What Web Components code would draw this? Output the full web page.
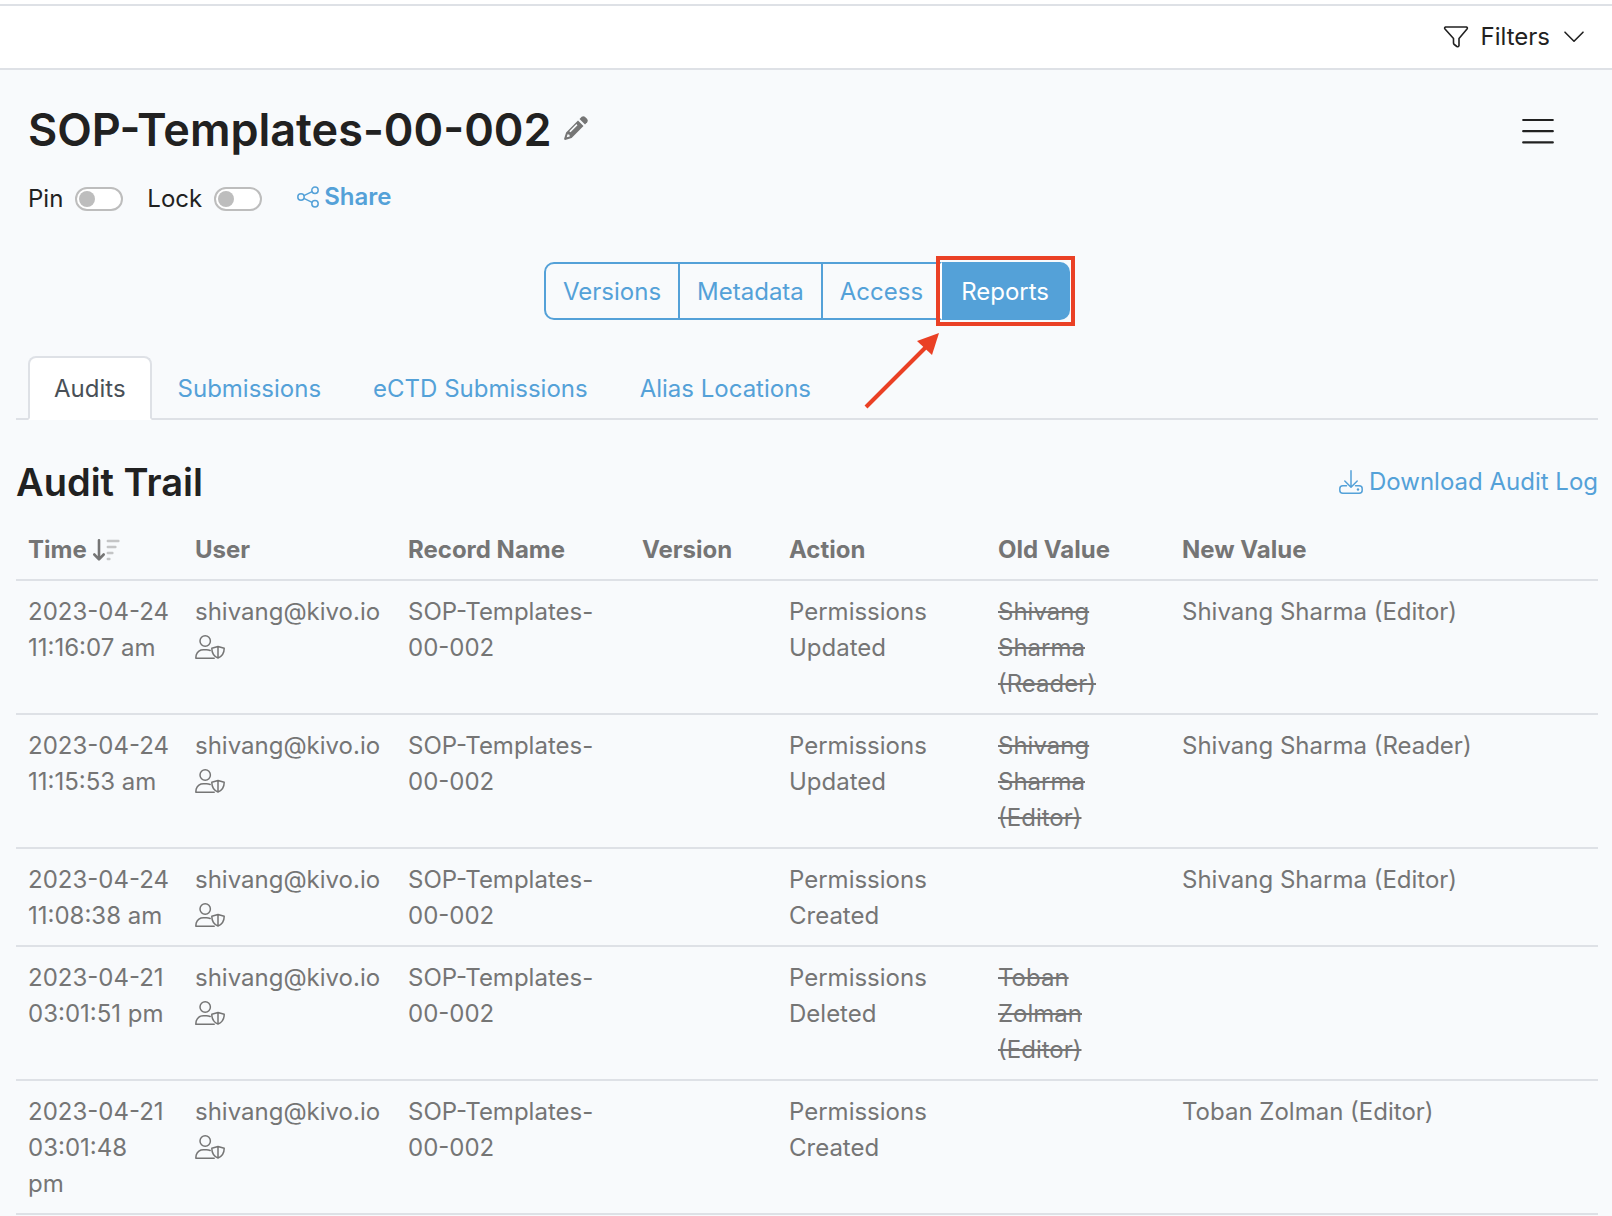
<!DOCTYPE html>
<html lang="en">
<head>
<meta charset="utf-8">
<title>SOP-Templates-00-002</title>
<style>
  :root {
    --ink: #212121;
    --muted: #757575;
    --blue: #54a1d8;
    --line: #dee1e6;
    --page: #f8fafc;
    --red: #ea4025;
  }
  body {
    margin: 0;
    background: var(--page);
    color: var(--ink);
    font: 400 24px/36px Inter, "Liberation Sans", sans-serif;
  }
</style>
</head>
<body>
<doc-page></doc-page>

<script>
const ICONS = {
  filter: [26, 24, '<path d="M2.6 2H23.4Q25 2.600 24 4L16 13.500V20.500Q15.500 22.300 13.900 21.500L11.300 19.500Q10.500 18.900 10.500 18V13.500L2 4Q1 2.600 2.600 2Z" fill="none" stroke="currentColor" stroke-width="1.600" stroke-linejoin="round"/>'],
  chevron: [20, 12, '<path d="M1 1.200 10 10.200 19 1.200" fill="none" stroke="currentColor" stroke-width="1.600" stroke-linecap="round" stroke-linejoin="round"/>'],
  menu: [32, 26, '<path d="M1.200 2H30.800M1.200 13.200H30.800M1.200 24.400H30.800" stroke="currentColor" stroke-width="2.200" stroke-linecap="round"/>'],
  pencil: [24, 24, '<path fill="currentColor" fill-rule="evenodd" d="M14 4.500 19.500 10 7.600 21.900 1.200 23.900Q0 24 .1 22.800L2.100 16.400ZM12.400 8.100 5.300 15.200 6.500 16.200 13.500 9.300ZM3.600 18.200 2.700 21.300 5.800 20.400 5.400 18.700Z"/><path fill="currentColor" d="M15.500 3 17.700.8Q19.300-.4 20.900.8L23.200 3.100Q24.500 4.800 23.200 6.300L21 8.500Z"/>'],
  share: [22, 22, '<g fill="none" stroke="currentColor" stroke-width="1.500"><circle cx="4" cy="11" r="3.200"/><circle cx="18" cy="4.200" r="3.200"/><circle cx="18" cy="17.800" r="3.200"/><path d="M6.900 9.600 15.100 5.600M6.900 12.400 15.100 16.400"/></g>'],
  sort: [27, 22, '<path d="M6 1.200V19.500M1.300 15.500 6 20.300 10.700 15.500" fill="none" stroke="currentColor" stroke-width="2.600" stroke-linecap="round" stroke-linejoin="round"/><path d="M14.800 2H25.400M14.800 8H22.400M14.800 14H19.400M14.800 20H16.400" stroke="currentColor" stroke-opacity=".4" stroke-width="2.400" stroke-linecap="round"/>'],
  download: [24, 24, '<g fill="none" stroke="currentColor" stroke-width="1.500" stroke-linecap="round" stroke-linejoin="round"><path d="M12 .8V17M5.800 11 12 17.200 18.200 11"/><path d="M7.500 15.700H3.800Q.8 15.700 .8 18.700V20.200Q.8 23.200 3.800 23.200H20.200Q23.200 23.200 23.200 20.200V18.700Q23.200 15.700 20.200 15.700H16.500"/></g><circle cx="19" cy="19.500" r="1.200" fill="currentColor"/>'],
  usershield: [30, 24, '<g fill="none" stroke="currentColor" stroke-width="1.500" stroke-linejoin="round"><circle cx="10.200" cy="6" r="5.200"/><path d="M15.200 15.500Q13.500 14.800 11.500 14.800H8.500Q3 14.800 1.200 20L.8 23.200H19.200" stroke-linecap="round"/><path d="M23 11.500 29.200 13.300Q29.200 20.500 23 23.100 16.800 20.500 16.800 13.300ZM23 11.500V23"/></g>']
};

class UiIcon extends HTMLElement {
  connectedCallback() {
    const [w, h, body] = ICONS[this.getAttribute('name')];
    this.attachShadow({mode: 'open'}).innerHTML = `
      <style>:host{display:inline-flex;flex:none}svg{display:block;overflow:visible}</style>
      <svg width="${w}" height="${h}" viewBox="0 0 ${w} ${h}" aria-hidden="true">${body}</svg>`;
  }
}
customElements.define('ui-icon', UiIcon);

class FilterBar extends HTMLElement {
  connectedCallback() {
    this.attachShadow({mode: 'open'}).innerHTML = `
      <style>
        :host{display:block;background:#fff;padding-top:4px}
        div{display:flex;justify-content:flex-end;align-items:center;height:62px;padding:0 28px;
          border-top:2px solid var(--line);border-bottom:2px solid var(--line)}
        button{display:flex;align-items:center;gap:12px;border:0;padding:0;background:none;color:inherit;font:inherit}
        .end{margin-left:2px}
      </style>
      <div><button type="button"><ui-icon name="filter"></ui-icon><slot></slot><ui-icon class="end" name="chevron"></ui-icon></button></div>`;
  }
}
customElements.define('filter-bar', FilterBar);

class UiSwitch extends HTMLElement {
  connectedCallback() {
    this.attachShadow({mode: 'open'}).innerHTML = `
      <style>
        :host{display:block}
        label{display:flex;align-items:center;gap:12px}
        input{appearance:none;box-sizing:border-box;display:flex;align-items:center;width:48px;height:24px;margin:0;padding:0 2px;
          border:2px solid #bdbdbd;border-radius:12px;background:#fff}
        input::before{content:"";width:16px;height:16px;border-radius:50%;background:#bdbdbd}
        input:checked{justify-content:flex-end}
      </style>
      <label><slot></slot><input type="checkbox" role="switch" aria-label="${this.textContent}"></label>`;
  }
}
customElements.define('ui-switch', UiSwitch);

class DocHeader extends HTMLElement {
  connectedCallback() {
    this.attachShadow({mode: 'open'}).innerHTML = `
      <style>
        :host{display:block;padding:0 12px}
        .top,.title,.tools,a{display:flex;align-items:center}
        .top{justify-content:space-between;padding-right:32px}
        .title{gap:12px}
        h1{margin:0;font-size:45px;line-height:58px;font-weight:600}
        button{border:0;padding:0;background:none;color:inherit;display:flex}
        .edit{color:var(--muted);padding-bottom:4px}
        .menu{padding-top:2px}
        .tools{gap:24px;margin-top:20px}
        a{gap:5px;margin-left:11px;padding-bottom:4px;color:var(--blue);font-weight:600;text-decoration:none}
      </style>
      <div class="top">
        <div class="title"><h1><slot></slot></h1><button class="edit" type="button" aria-label="Rename"><ui-icon name="pencil"></ui-icon></button></div>
        <button class="menu" type="button" aria-label="Menu"><ui-icon name="menu"></ui-icon></button>
      </div>
      <div class="tools"><ui-switch>Pin</ui-switch><ui-switch>Lock</ui-switch><a href="#share"><ui-icon name="share"></ui-icon>Share</a></div>`;
  }
}
customElements.define('doc-header', DocHeader);

class SectionSwitch extends HTMLElement {
  connectedCallback() {
    this.attachShadow({mode: 'open'}).innerHTML = `
      <style>
        :host{display:flex;justify-content:center}
        .group,.marked{display:flex;position:relative}
        button{height:58px;padding:2px 17px 0;border:2px solid var(--blue);background:none;color:var(--blue);font:inherit}
        button+button{margin-left:-2px}
        .group>button:first-child{border-radius:10px 0 0 10px}
        .group>button:nth-last-child(2){border-right-color:#fff}
        .marked button{padding:2px 19px 0;border-left:0;border-radius:0 10px 10px 0;background:var(--blue);color:#fff}
        .marked::after{content:"";position:absolute;inset:-6px -5px -6px -6px;border:4px solid var(--red);pointer-events:none}
        svg{position:absolute;right:100%;top:100%;margin:12px 3px 0 0}
      </style>
      <div class="group">
        <button type="button">Versions</button><button type="button">Metadata</button><button type="button">Access</button>
        <div class="marked"><button type="button" aria-pressed="true">Reports</button>
          <svg width="76" height="78" viewBox="0 0 76 78" aria-hidden="true"><path d="M3 75 64 14" stroke="#ea4025" stroke-width="4"/><path d="M76 1 54 9 69 23Z" fill="#ea4025"/></svg>
        </div>
      </div>`;
  }
}
customElements.define('section-switch', SectionSwitch);

class ReportTabs extends HTMLElement {
  connectedCallback() {
    this.attachShadow({mode: 'open'}).innerHTML = `
      <style>
        :host{display:block}
        nav{display:flex;padding-left:12px;border-bottom:2px solid var(--line)}
        a{padding:13px 24px 11px;margin-bottom:-2px;border:2px solid transparent;border-radius:8px 8px 0 0;color:var(--blue);text-decoration:none}
        a[aria-current]{background:#fff;border-color:var(--line) var(--line) #fff;color:#495057}
      </style>
      <nav><a href="#audits" aria-current="page">Audits</a><a href="#submissions">Submissions</a><a href="#ectd">eCTD Submissions</a><a href="#alias">Alias Locations</a></nav>`;
  }
}
customElements.define('report-tabs', ReportTabs);

class SectionHeading extends HTMLElement {
  connectedCallback() {
    this.attachShadow({mode: 'open'}).innerHTML = `
      <style>
        :host{display:flex;align-items:center;justify-content:space-between}
        h2{margin:0;font-size:38px;line-height:48px;font-weight:600}
        a{display:flex;align-items:center;gap:6px;color:var(--blue);text-decoration:none}
      </style>
      <h2><slot></slot></h2><a href="#download"><ui-icon name="download"></ui-icon>Download Audit Log</a>`;
  }
}
customElements.define('section-heading', SectionHeading);

const USER = 'shivang@kivo.io', RECORD = 'SOP-Templates-<br>00-002';
const ROWS = [
  ['2023-04-24<br>11:16:07 am', 'Updated', 'Shivang<br>Sharma<br>(Reader)', 'Shivang Sharma (Editor)'],
  ['2023-04-24<br>11:15:53 am', 'Updated', 'Shivang<br>Sharma<br>(Editor)', 'Shivang Sharma (Reader)'],
  ['2023-04-24<br>11:08:38 am', 'Created', '', 'Shivang Sharma (Editor)'],
  ['2023-04-21<br>03:01:51 pm', 'Deleted', 'Toban<br>Zolman<br>(Editor)', ''],
  ['2023-04-21<br>03:01:48<br>pm', 'Created', '', 'Toban Zolman (Editor)']
];

class AuditTable extends HTMLElement {
  connectedCallback() {
    const widths = [167, 213, 234, 147, 209, 184, 428];
    const cols = widths.map(w => `<col style="width:calc(100% * ${w} / 1582)">`).join('');
    const rows = ROWS.map(([time, verb, old, next]) => `<tr><td>${time}</td><td>${USER}<br><span><ui-icon name="usershield"></ui-icon></span></td>
      <td>${RECORD}</td><td></td><td>Permissions<br>${verb}</td><td><s>${old}</s></td><td>${next}</td></tr>`).join('');
    this.attachShadow({mode: 'open'}).innerHTML = `
      <style>
        :host{display:block;color:var(--muted)}
        table{width:100%;table-layout:fixed;border-collapse:separate;border-spacing:0}
        th,td{padding:13px 12px 11px;border-bottom:2px solid var(--line);text-align:left;vertical-align:top;white-space:nowrap}
        th{font-weight:700}
        .sort{display:flex;align-items:center;gap:6px}
        span{display:flex;align-items:center;box-sizing:border-box;height:36px;padding-bottom:2px}
      </style>
      <table><colgroup>${cols}</colgroup>
        <thead><tr><th><div class="sort">Time<ui-icon name="sort"></ui-icon></div></th><th>User</th><th>Record Name</th><th>Version</th><th>Action</th><th>Old Value</th><th>New Value</th></tr></thead>
        <tbody>${rows}</tbody></table>`;
  }
}
customElements.define('audit-table', AuditTable);

class DocPage extends HTMLElement {
  connectedCallback() {
    this.attachShadow({mode: 'open'}).innerHTML = `
      <style>
        :host{display:block}
        main{padding:31px 14px 0 16px}
        section-switch{margin-top:43px}
        report-tabs{margin-top:36px}
        section-heading{margin-top:38px}
        audit-table{margin-top:13px}
      </style>
      <filter-bar>Filters</filter-bar>
      <main>
        <doc-header>SOP-Templates-00-002</doc-header>
        <section-switch></section-switch>
        <report-tabs></report-tabs>
        <section-heading>Audit Trail</section-heading>
        <audit-table></audit-table>
      </main>`;
  }
}
customElements.define('doc-page', DocPage);
</script>
</body>
</html>
